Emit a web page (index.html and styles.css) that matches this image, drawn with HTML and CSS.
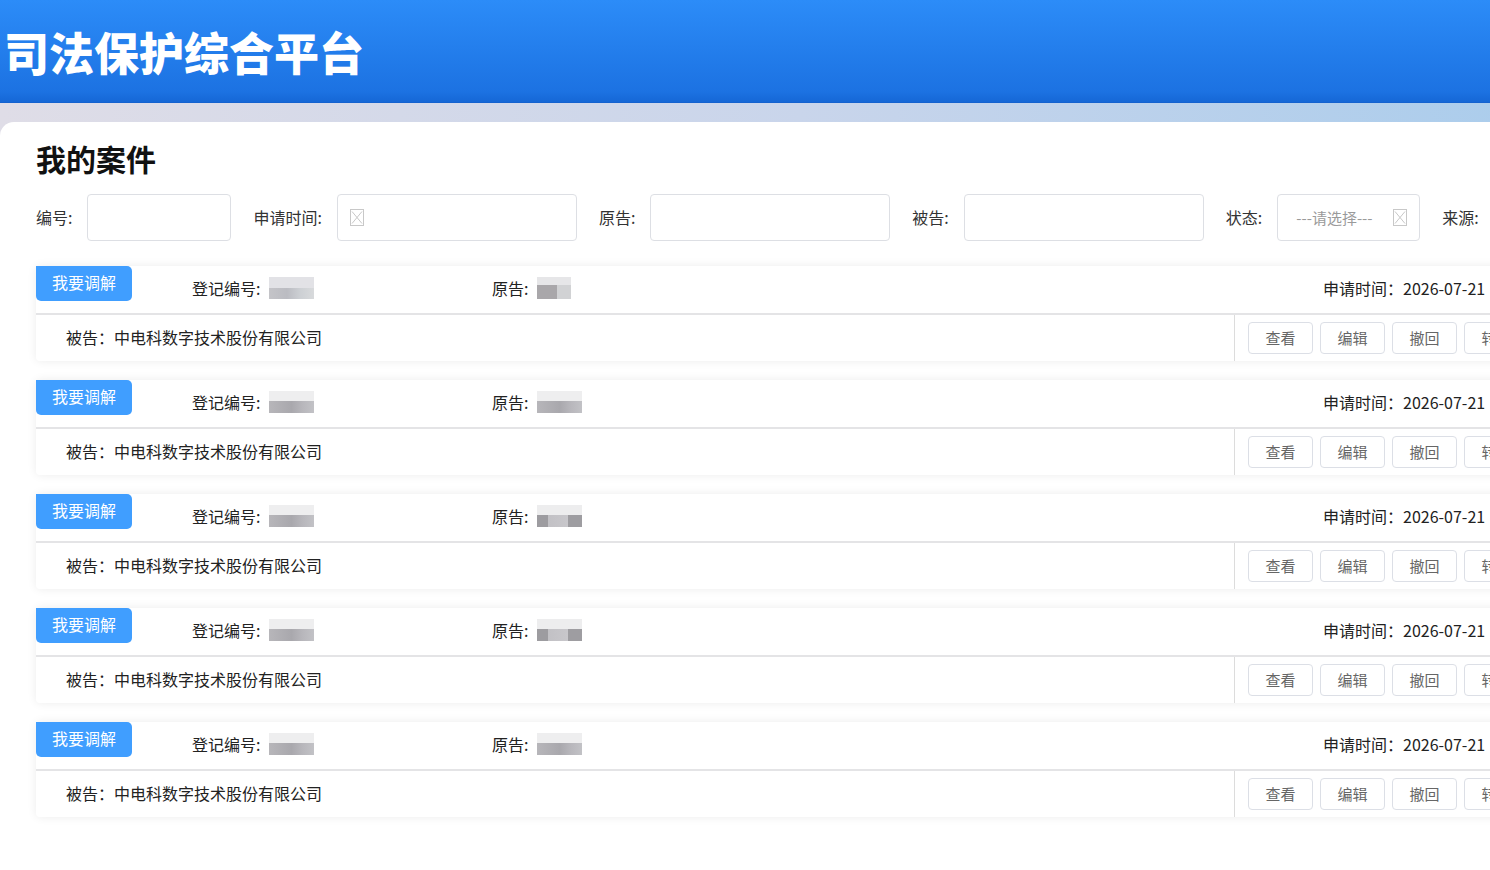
FILE: index.html
```html
<!DOCTYPE html>
<html>
<head>
    <meta charset="UTF-8">
    <link rel="stylesheet" href="styles.css">
</head>
<body>
    <div class="page">
        <div class="header">
            <h1 class="title">司法保护综合平台</h1>
        </div>
        <div class="band">
            <div class="panel">
                <h2 class="heading">我的案件</h2>

                <div class="filters">
                    <div class="field">
                        <label>编号:</label>
                        <div class="input w-sm"></div>
                    </div>
                    <div class="field">
                        <label>申请时间:</label>
                        <div class="input w-lg">
                            <svg class="broken" width="14" height="17" viewBox="0 0 14 17"><rect x="0.5" y="0.5" width="13" height="16" fill="none" stroke="#c8c8c8"/><path d="M2 2.5 L12 14.5 M12 2.5 L2 14.5" stroke="#c8c8c8" fill="none"/></svg>
                        </div>
                    </div>
                    <div class="field">
                        <label>原告:</label>
                        <div class="input w-lg"></div>
                    </div>
                    <div class="field">
                        <label>被告:</label>
                        <div class="input w-lg"></div>
                    </div>
                    <div class="field">
                        <label>状态:</label>
                        <div class="input w-sm select">
                            <span class="placeholder">---请选择---</span>
                            <svg class="broken" width="14" height="17" viewBox="0 0 14 17"><rect x="0.5" y="0.5" width="13" height="16" fill="none" stroke="#c8c8c8"/><path d="M2 2.5 L12 14.5 M12 2.5 L2 14.5" stroke="#c8c8c8" fill="none"/></svg>
                        </div>
                    </div>
                    <div class="field">
                        <label>来源:</label>
                    </div>
                </div>

                <div id="cases">
                    <!-- Will be filled through JavaScript -->
                </div>
            </div>
        </div>
    </div>
    <script type="text/javascript" charset="UTF-8">
        let cases = document.getElementById("cases");
        let blurs = [
            ['a', 'b'],
            ['c', 'c'],
            ['c', 'd'],
            ['c', 'd'],
            ['c', 'c']
        ];
        for (let i = 0; i < 5; i++) {
            let card = document.createElement('div');
            card.className = 'card';
            card.innerHTML =
                '<div class="card-top">' +
                    '<button class="mediate">我要调解</button>' +
                    '<div class="reg">登记编号:<span class="blur blur-' + blurs[i][0] + '"></span></div>' +
                    '<div class="plaintiff">原告:<span class="blur blur-' + blurs[i][1] + (i === 0 ? ' narrow' : '') + '"></span></div>' +
                    '<div class="date">申请时间：2026-07-21</div>' +
                '</div>' +
                '<div class="card-bottom">' +
                    '<div class="defendant">被告：中电科数字技术股份有限公司</div>' +
                    '<div class="actions">' +
                        '<button>查看</button><button>编辑</button><button>撤回</button><button>转交</button>' +
                    '</div>' +
                '</div>';
            cases.appendChild(card);
        }
    </script>
</body>
</html>
```

FILE: styles.css
```css
body {
    margin: 0;
    overflow: hidden;
    font-family: "Noto Sans CJK SC", "Noto Sans", sans-serif;
    color: #333333;
}

.page {
    width: 1600px;
}

.header {
    height: 102px;
    background-image: linear-gradient(to bottom, #2c8cf8, #1c72e2 90%, #1567d6);
    border-bottom: 1px solid #1462cf;
    display: flex;
    align-items: center;
}

.title {
    margin: 0 0 0 4px;
    font-size: 45px;
    font-weight: 900;
    color: #ffffff;
    letter-spacing: 0;
    line-height: 1;
}

.band {
    padding-top: 19px;
    background-image: linear-gradient(to right, #dfdde7, #c9d5eb 50%, #a8ccec);
}

.panel {
    background-color: #ffffff;
    border-top-left-radius: 14px;
    padding: 18px 0 60px 36px;
}

.heading {
    margin: 0 0 18px 0;
    font-size: 30px;
    line-height: 36px;
    font-weight: 700;
    color: #111111;
}

.filters {
    display: flex;
    align-items: center;
    gap: 22px;
    height: 47px;
    margin-bottom: 25px;
}

.field {
    display: flex;
    align-items: center;
    gap: 15px;
    flex-shrink: 0;
}

.field label {
    font-size: 16px;
    color: #333333;
    white-space: nowrap;
    padding-bottom: 2px;
}

.input {
    height: 45px;
    border: 1px solid #dddfe4;
    border-radius: 4px;
    box-sizing: content-box;
    display: flex;
    align-items: center;
    padding: 0 12px;
    flex-shrink: 0;
}

.w-sm {
    width: 118px;
}

.w-lg {
    width: 214px;
}

.select {
    justify-content: space-between;
    padding: 0 12px 0 18px;
    width: 111px;
}

.placeholder {
    font-size: 15px;
    color: #9a9a9a;
    white-space: nowrap;
}

.card {
    width: 1506px;
    background-color: #ffffff;
    box-shadow: 0 0 10px rgba(0, 0, 0, 0.08);
    border-radius: 4px;
    margin-bottom: 19px;
}

.card-top {
    display: flex;
    align-items: center;
    height: 47px;
    border-bottom: 2px solid #e4e4e6;
    font-size: 16px;
    color: #222222;
}

.card-top > .mediate {
    align-self: flex-start;
    width: 96px;
    height: 35px;
    border: none;
    border-radius: 0 5px 5px 5px;
    background-color: #409eff;
    color: #ffffff;
    font-family: inherit;
    font-size: 16px;
    padding: 0 0 3px 0;
}

.reg {
    margin-left: 60px;
    width: 300px;
    display: flex;
    align-items: center;
    padding-bottom: 3px;
}

.plaintiff {
    width: 831px;
    display: flex;
    align-items: center;
    padding-bottom: 3px;
}

.date {
    white-space: nowrap;
    padding-bottom: 3px;
}

.blur {
    display: inline-block;
    width: 45px;
    height: 22px;
    margin-left: 9px;
}

.blur.narrow {
    width: 34px;
}

.blur-a {
    background-image:
        linear-gradient(to bottom, #e2e2e6 50%, transparent 50%),
        linear-gradient(to right, #c4c4c8, #bbbcc2 40%, #cdd0d4 70%, #d8dadc);
}

.blur-b {
    background-image:
        linear-gradient(to bottom, #e6e6e8 35%, transparent 35%),
        linear-gradient(to right, #a9a7aa 60%, #d1d2d4 60%);
}

.blur-c {
    background-image:
        linear-gradient(to bottom, #eeeeef 45%, transparent 45%),
        linear-gradient(to right, #b7b6ba, #a9a8ad 50%, #b8b7bc 75%, #c2c2c6);
}

.blur-d {
    background-image:
        linear-gradient(to bottom, #ededee 45%, transparent 45%),
        linear-gradient(to right, #9d9ca0 25%, #c2c1c5 25%, #c8c7cb 70%, #9e9da1 70%);
}

.card-bottom {
    display: flex;
    height: 46px;
}

.defendant {
    flex: 1;
    display: flex;
    align-items: center;
    padding-left: 30px;
    padding-bottom: 3px;
    font-size: 16px;
    color: #222222;
    border-right: 1px solid #dcdcdc;
}

.actions {
    display: flex;
    align-items: center;
    gap: 7px;
    padding: 0 13px;
}

.actions > button {
    width: 65px;
    height: 32px;
    border: 1px solid #dcdfe6;
    border-radius: 4px;
    background-color: #ffffff;
    color: #666666;
    font-family: inherit;
    font-size: 15px;
    padding: 0 0 2px 0;
}
```
